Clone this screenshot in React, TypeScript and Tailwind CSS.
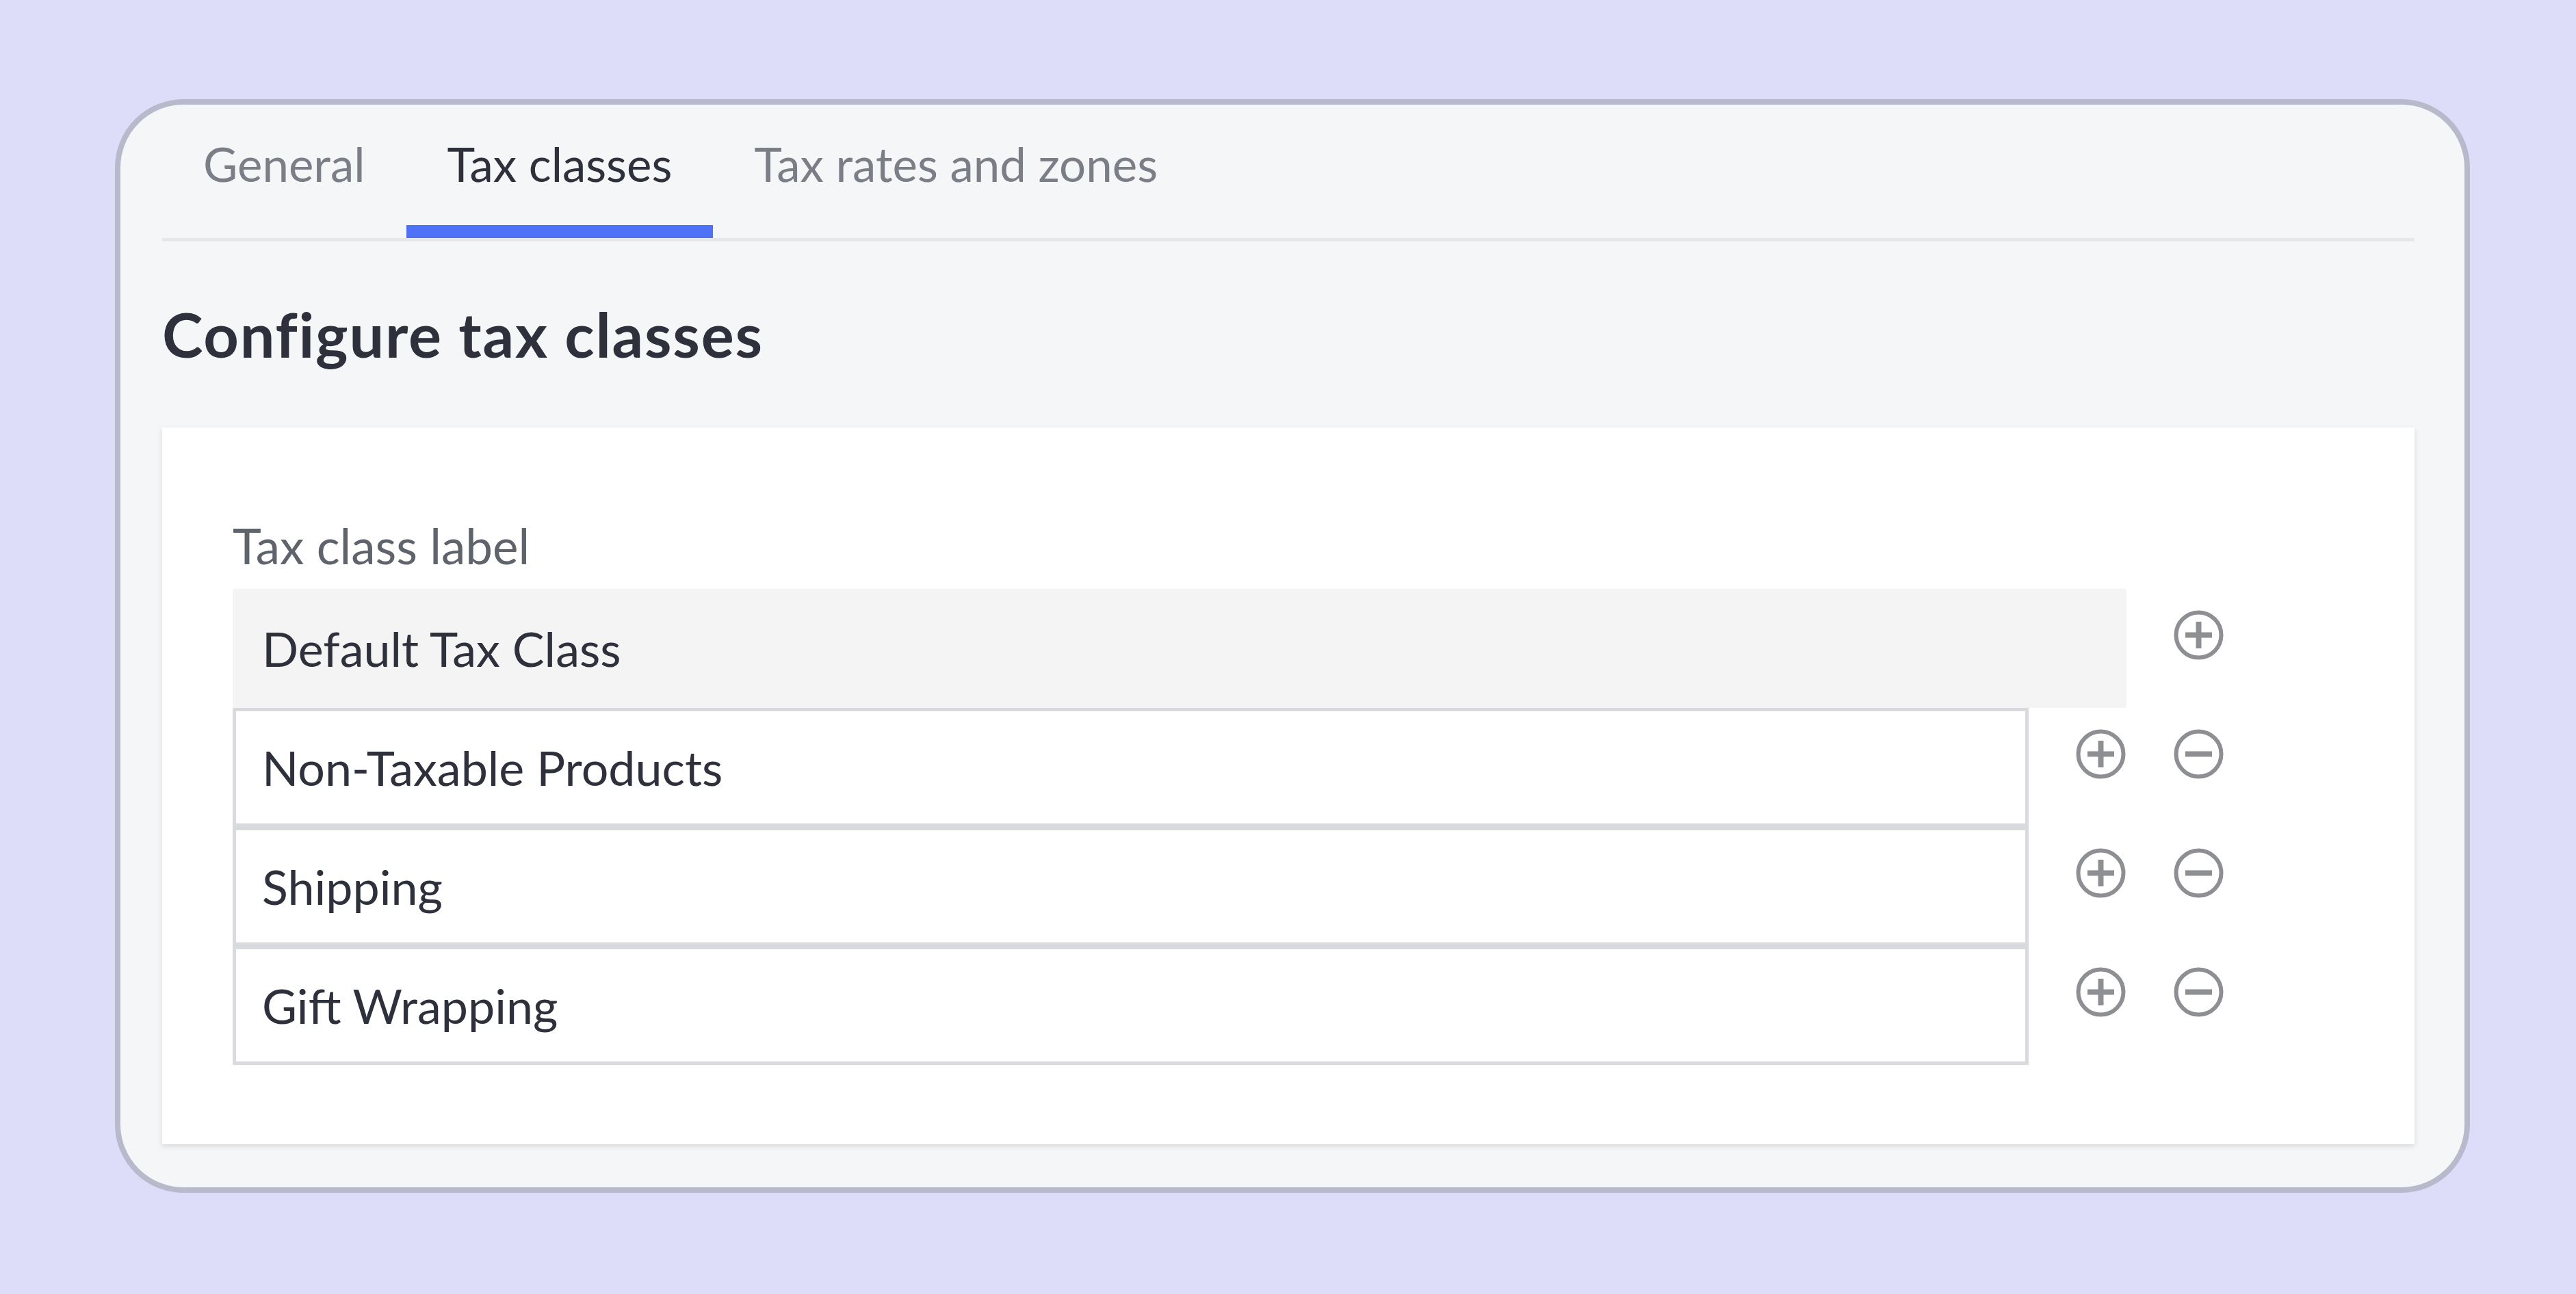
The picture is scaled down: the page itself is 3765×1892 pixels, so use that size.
import { Fragment } from "react";

const tabs = [
  { label: "General", active: false },
  { label: "Tax classes", active: true },
  { label: "Tax rates and zones", active: false },
];

const extraClasses = ["Non-Taxable Products", "Shipping", "Gift Wrapping"];

function CircleIcon({ minus }: { minus?: boolean }) {
  return (
    <svg width="75" height="75" viewBox="0 0 75 75" fill="none" className="mt-[30px]">
      <circle cx="37.5" cy="37.5" r="33" stroke="#8d8f93" strokeWidth="6" />
      <line x1="18" y1="37.5" x2="57" y2="37.5" stroke="#8d8f93" strokeWidth="8" />
      {!minus && <line x1="37.5" y1="18" x2="37.5" y2="57" stroke="#8d8f93" strokeWidth="8" />}
    </svg>
  );
}

export default function App() {
  return (
    <div
      className="min-h-screen w-full bg-[#dddcf9] pl-[168px] pt-[145px]"
      style={{ fontFamily: "Lato, 'Open Sans', sans-serif" }}
    >
      <div className="w-[3442px] h-[1599px] rounded-[100px] border-[8px] border-[#b9b9cc] bg-[#f5f6f8] pl-[61px] pr-[73px]">
        {/* Tabs */}
        <div className="flex border-b-[5px] border-[#e5e7ea]">
          {tabs.map((tab) => (
            <button
              key={tab.label}
              className={`px-[60px] pt-[46px] pb-[48px] border-b-[19px] text-[69px] leading-[82px] ${
                tab.active ? "border-[#4d72f8] text-[#2e303b]" : "border-transparent text-[#7b7e86]"
              }`}
            >
              {tab.label}
            </button>
          ))}
        </div>

        <h1 className="mt-[82px] text-[90px] leading-[106px] tracking-[1.75px] font-bold text-[#2e303b]">
          Configure tax classes
        </h1>

        {/* Panel */}
        <div className="mt-[84px] bg-white shadow-[0_3px_8px_rgba(0,0,0,0.12)] pl-[103px] pr-[278px] pt-[132px] pb-[116px]">
          <div className="text-[71px] leading-[82px] text-[#5f636b]">Tax class label</div>
          <div className="mt-[22px] grid grid-cols-[1fr_75px_75px] gap-x-[68px]">
            <div className="col-span-2 h-[174px] flex items-center bg-[#f4f4f5] rounded-[3px] pl-[43px] text-[70px] text-[#2e303b]">
              Default Tax Class
            </div>
            <div className="flex justify-center">
              <CircleIcon />
            </div>
            {extraClasses.map((name) => (
              <Fragment key={name}>
                <div className="h-[174px] flex items-center border-[5px] border-[#d9dadd] bg-white pl-[38px] text-[70px] text-[#2e303b]">
                  {name}
                </div>
                <div className="flex justify-center">
                  <CircleIcon />
                </div>
                <div className="flex justify-center">
                  <CircleIcon minus />
                </div>
              </Fragment>
            ))}
          </div>
        </div>
      </div>
    </div>
  );
}
